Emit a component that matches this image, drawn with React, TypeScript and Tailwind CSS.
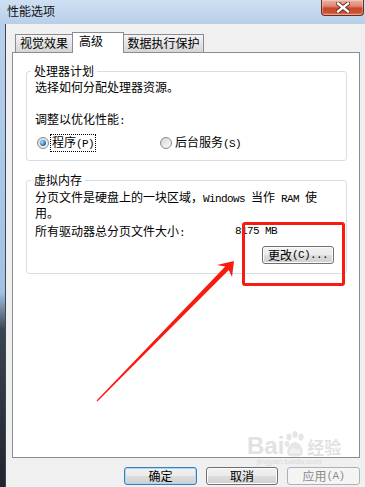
import React from "react";

const mono = "font-['Liberation_Mono',monospace] text-[11px] tracking-[-0.6px]";

function Radio({ checked }: { checked?: boolean }) {
  return (
    <span className="w-[12px] h-[12px] shrink-0 rounded-full border border-[#8a8a8a] bg-[linear-gradient(135deg,#d6d6d6,#fbfbfb)] flex items-center justify-center">
      {checked && (
        <span className="w-[6px] h-[6px] rounded-full bg-[radial-gradient(circle_at_35%_35%,#b6e2ff,#2a73b8_60%,#174a80)]" />
      )}
    </span>
  );
}

function Btn({ children, className }: { children: React.ReactNode; className: string }) {
  return (
    <div className={"h-[18px] rounded-[3px] border flex items-center justify-center leading-[16px] " + className}>
      {children}
    </div>
  );
}

const normalBtn =
  "border-[#707070] bg-[linear-gradient(to_bottom,#f2f2f2_0%,#ebebeb_48%,#dddddd_52%,#cfcfcf_100%)] shadow-[inset_0_0_0_1px_#fbfbfb]";

export default function App() {
  return (
    <div className="w-[365px] h-[487px] relative overflow-hidden flex flex-col bg-[#f0f0f0] text-[12px] text-black font-['Noto_Sans_CJK_SC','Noto_Sans_CJK_JP',sans-serif]">
      {/* 标题栏 */}
      <div className="h-[24px] shrink-0 flex items-start justify-between bg-linear-to-b from-[#cfe0f3] to-[#b8cfe9]">
        <span className="pl-[7px] pt-[3px] leading-[16px] text-[#111]">性能选项</span>
        <div className="w-[43px] h-[16px] mr-[1px] rounded-b-[4px] border border-t-0 border-[#6a2a1f] bg-[linear-gradient(to_bottom,#ebb0a2_0%,#dd8a76_40%,#c8472d_55%,#cc5236_85%,#e08d6f_100%)] shadow-[inset_0_0_0_1px_rgba(255,255,255,0.3)] flex items-start justify-center pt-[2px]">
          <svg width="14" height="11" viewBox="0 0 14 11">
            <path d="M2 1.5 L12 9.5 M12 1.5 L2 9.5" stroke="#5a2418" strokeWidth="4.2" strokeLinecap="square" />
            <path d="M2 1.5 L12 9.5 M12 1.5 L2 9.5" stroke="#ffffff" strokeWidth="2.4" strokeLinecap="square" />
          </svg>
        </div>
      </div>

      <div className="flex-1 flex">
        <div className="w-[5px] bg-[linear-gradient(to_bottom,#b6d0ec_0%,#a2c1e4_58%,#3a4450_66%,#1f252b_100%)]" />
        <div className="w-[1px] bg-[#3d4854]" />
        <div className="flex-1 flex flex-col pl-[6px] pt-[8px]">
          {/* 选项卡 */}
          <div className="flex items-end h-[20px] pl-[3px]">
            <div className="w-[58px] h-[18px] border border-b-0 border-[#898c95] bg-linear-to-b from-[#f4f4f4] to-[#d6d6d6] flex justify-center leading-[16px]">
              视觉效果
            </div>
            <div className="relative z-10 -ml-[1px] -mb-[1px] w-[52px] h-[21px] border border-b-0 border-[#898c95] bg-white pl-[6px] leading-[16px]">
              高级
            </div>
            <div className="-ml-[1px] w-[81px] h-[18px] border border-b-0 border-[#898c95] bg-linear-to-b from-[#f4f4f4] to-[#d6d6d6] flex justify-center leading-[16px]">
              数据执行保护
            </div>
          </div>

          {/* 选项卡面板 */}
          <div className="w-[348px] h-[406px] border border-[#898c95] bg-white pt-[10px] pl-[13px]">
            <fieldset className="w-[321px] border border-[#d5dfe5] rounded-[3px] pl-[8px] pb-[9px]">
              <legend className="-ml-[4px] px-[3px] leading-[16px]">处理器计划</legend>
              <p className="leading-[16px]">选择如何分配处理器资源。</p>
              <p className="mt-[16px] leading-[16px]">
                调整以优化性能<span className={mono}>:</span>
              </p>
              <div className="mt-[6px] flex items-center h-[16px]">
                <div className="w-[125px] flex items-center pl-[2px]">
                  <Radio checked />
                  <span className="ml-[1px] border border-dotted border-black px-[1px] leading-[14px]">
                    程序<span className={mono}>(P)</span>
                  </span>
                </div>
                <div className="flex items-center">
                  <Radio />
                  <span className="ml-[3px] leading-[16px]">
                    后台服务<span className={mono}>(S)</span>
                  </span>
                </div>
              </div>
            </fieldset>

            <fieldset className="mt-[11px] w-[321px] border border-[#d5dfe5] rounded-[3px] pl-[8px] pr-[12px] pb-[9px]">
              <legend className="-ml-[4px] px-[3px] leading-[16px]">虚拟内存</legend>
              <p className="pt-[2px] leading-[13px]">
                分页文件是硬盘上的一块区域，<span className={mono}>Windows </span>当作
                <span className={mono}> RAM </span>使
                <br />
                用。
              </p>
              <div className="mt-[4px] flex leading-[16px]">
                <span className="w-[200px]">
                  所有驱动器总分页文件大小<span className={mono}>:</span>
                </span>
                <span className={mono}>8175 MB</span>
              </div>
              <div className="mt-[5px] flex justify-end">
                <Btn className={"w-[72px] " + normalBtn}>
                  更改<span className={mono}>(C)...</span>
                </Btn>
              </div>
            </fieldset>
          </div>

          {/* 底部按钮 */}
          <div className="mt-[9px] w-[348px] flex justify-end gap-[9px]">
            <Btn className="w-[73px] border-[#3c7fb1] bg-[linear-gradient(to_bottom,#f2f2f2_0%,#ebebeb_48%,#dddddd_52%,#cfcfcf_100%)] shadow-[inset_0_0_0_1px_#a6d8f8]">
              确定
            </Btn>
            <Btn className={"w-[72px] " + normalBtn}>取消</Btn>
            <Btn className="w-[73px] border-[#adb2b5] bg-[#f4f4f4] text-[#8b8b8b]">
              应用<span className={mono}>(A)</span>
            </Btn>
          </div>
        </div>
      </div>

      {/* 红色标注框 */}
      <div className="absolute left-[242px] top-[222px] w-[103px] h-[64px] border-[3px] border-[#f91b10] rounded-[3px] pointer-events-none" />

      {/* 红色箭头 */}
      <svg className="absolute left-0 top-0 pointer-events-none" width="365" height="487" viewBox="0 0 365 487">
        <polygon
          points="96.6,400.6 225.2,266.4 217,265 234,261 232,277 228.8,269.9 97.4,401.4"
          fill="#f91b10"
        />
      </svg>

      {/* 水印 */}
      <div className="absolute left-[247px] top-[431px] h-[26px] flex items-end text-[#e2e2e2] pointer-events-none">
        <span className="font-['Liberation_Sans',sans-serif] font-bold text-[24px] leading-[22px]">Bai</span>
        <svg width="22" height="26" viewBox="0 0 22 26">
          <ellipse cx="5" cy="6" rx="2.6" ry="3.4" fill="#e6e6e6" />
          <ellipse cx="11" cy="3.5" rx="2.6" ry="3.4" fill="#e6e6e6" />
          <ellipse cx="17" cy="6" rx="2.6" ry="3.4" fill="#e6e6e6" />
          <ellipse cx="3" cy="13" rx="2.4" ry="3" fill="#e6e6e6" />
          <path d="M11 11 C16 11 21 20 18 24 C15 26 7 26 4 24 C1 20 6 11 11 11 Z" fill="#e6e6e6" />
          <text x="11" y="22" textAnchor="middle" fontSize="8" fontWeight="bold" fill="#fafafa" fontFamily="Liberation Sans">du</text>
        </svg>
        <span className="ml-[1px] font-bold text-[17px] leading-[20px]">经验</span>
      </div>
      <span className="absolute left-[257px] top-[458px] text-[8px] leading-[8px] text-[#dadada] font-['Liberation_Sans',sans-serif] pointer-events-none">
        jingyan.baidu.com
      </span>
    </div>
  );
}
